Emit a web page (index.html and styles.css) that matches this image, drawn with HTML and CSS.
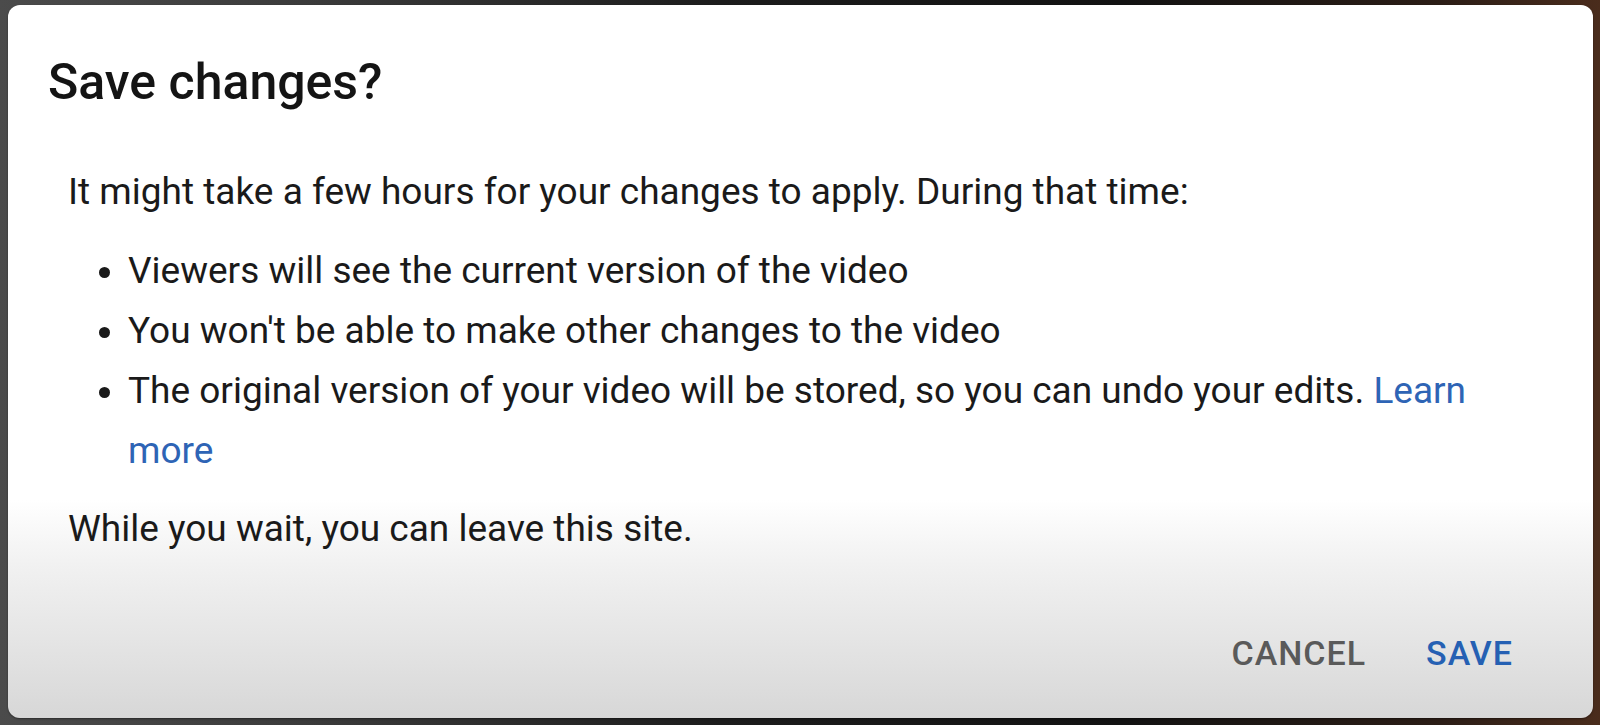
FILE: index.html
```html
<!DOCTYPE html>
<html lang="en">
<head>
<meta charset="utf-8">
<title>Save changes?</title>
<link rel="stylesheet" href="styles.css">
</head>
<body>
<div class="backdrop">
  <div class="dialog" role="dialog" aria-labelledby="dlg-title">
    <h1 class="dialog-title" id="dlg-title">Save changes?</h1>
    <div class="dialog-content">
      <p class="para">It might take a few hours for your changes to apply. During that time:</p>
      <ul class="list">
        <li>Viewers will see the current version of the video</li>
        <li>You won't be able to make other changes to the video</li>
        <li>The original version of your video will be stored, so you can undo your edits. <a class="link" href="#">Learn more</a></li>
      </ul>
      <p class="para wait">While you wait, you can leave this site.</p>
    </div>
    <div class="dialog-actions">
      <button class="btn btn-cancel" type="button">CANCEL</button>
      <button class="btn btn-save" type="button">SAVE</button>
    </div>
  </div>
</div>
</body>
</html>
```
FILE: styles.css
```css
html, body {
  margin: 0;
  padding: 0;
  height: 100%;
}
body {
  background: linear-gradient(to right, #4b4b4b 0, #3a3a3a 20%, #1c1c1c 45%, #121212 70%, #2b1d16 90%, #4a2c1c 100%);
  font-family: Roboto, "Noto Sans", "Liberation Sans", sans-serif;
  overflow: hidden;
}
.backdrop {
  height: 725px;
  padding: 5px 7px 7px 8px;
  box-sizing: border-box;
  display: flex;
}
.dialog {
  flex: 1;
  display: flex;
  flex-direction: column;
  border-radius: 12px;
  background: linear-gradient(to bottom, #ffffff 0, #ffffff 495px, #f1f1f1 560px, #e4e4e4 640px, #d7d7d7 100%);
  box-shadow: 0 1px 2px rgba(0,0,0,0.4);
  overflow: hidden;
}
.dialog-title {
  margin: 0;
  padding: 49px 0 0 40px;
  font-size: 50px;
  line-height: 56px;
  font-weight: 500;
  color: #141414;
}
.dialog-content {
  padding: 52px 80px 0 60px;
  font-size: 37px;
  line-height: 60px;
  color: #1a1a1a;
}
.para {
  margin: 0;
}
.list {
  margin: 19px 0 0 0;
  padding: 0 0 0 60px;
}
.wait {
  margin-top: 18px;
}
.link {
  color: #2e64b5;
  text-decoration: none;
}
.dialog-actions {
  margin-top: auto;
  display: flex;
  justify-content: flex-end;
  gap: 28px;
  padding: 0 64px 37px 0;
}
.btn {
  font-family: Roboto, "Noto Sans", "Liberation Sans", sans-serif;
  font-size: 34px;
  line-height: 40px;
  font-weight: 500;
  letter-spacing: 1px;
  background: none;
  border: none;
  padding: 8px 16px;
  cursor: pointer;
}
.btn-cancel {
  color: #5a5a5a;
}
.btn-save {
  color: #2560b3;
}
```
